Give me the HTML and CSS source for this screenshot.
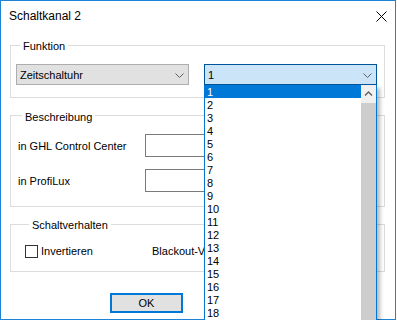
FILE: index.html
```html
<!DOCTYPE html>
<html lang="de">
<head>
  <meta charset="UTF-8" />
  <title>Schaltkanal 2</title>
  <link rel="stylesheet" href="styles.css">
</head>
<body>
  <div class="window">
    <div class="titlebar">
      <span class="title">Schaltkanal 2</span>
      <svg class="close" width="11" height="11" viewBox="0 0 11 11">
        <path d="M0.5 0.5 L10.5 10.5 M10.5 0.5 L0.5 10.5" stroke="#000" stroke-width="1" fill="none"/>
      </svg>
    </div>

    <div class="content">
      <!-- Funktion -->
      <div class="group group-funktion">
        <div class="legend">Funktion</div>
        <div class="combo-row">
          <div class="combo">
            <span>Zeitschaltuhr</span>
            <svg class="chev" width="9" height="5" viewBox="0 0 9 5"><path d="M0.5 0.5 L4.5 4.5 L8.5 0.5" stroke="#606060" fill="none"/></svg>
          </div>
          <div class="combo combo-open">
            <span>1</span>
            <svg class="chev" width="9" height="5" viewBox="0 0 9 5"><path d="M0.5 0.5 L4.5 4.5 L8.5 0.5" stroke="#606060" fill="none"/></svg>
            <div class="dropdown">
              <ul class="drop-list">
                <li class="selected">1</li>
                <li>2</li>
                <li>3</li>
                <li>4</li>
                <li>5</li>
                <li>6</li>
                <li>7</li>
                <li>8</li>
                <li>9</li>
                <li>10</li>
                <li>11</li>
                <li>12</li>
                <li>13</li>
                <li>14</li>
                <li>15</li>
                <li>16</li>
                <li>17</li>
                <li>18</li>
              </ul>
              <div class="scrollbar">
                <div class="scroll-up">
                  <svg width="9" height="5" viewBox="0 0 9 5"><path d="M1 4.5 L4.5 1 L8 4.5" stroke="#606060" stroke-width="1.4" fill="none"/></svg>
                </div>
                <div class="scroll-thumb"></div>
              </div>
            </div>
          </div>
        </div>
      </div>

      <!-- Beschreibung -->
      <div class="group group-besch">
        <div class="legend">Beschreibung</div>
        <div class="form-grid">
          <label>in GHL Control Center</label>
          <div class="textbox"></div>
          <label>in ProfiLux</label>
          <div class="textbox"></div>
        </div>
      </div>

      <!-- Schaltverhalten -->
      <div class="group group-schalt">
        <div class="legend">Schaltverhalten</div>
        <div class="check-row">
          <div class="check-item"><span class="checkbox"></span>Invertieren</div>
          <div class="blackout">Blackout-Verhalten</div>
        </div>
      </div>

      <button class="ok-btn">OK</button>
    </div>
  </div>
</body>
</html>
```

FILE: styles.css
```css
html, body {
  margin: 0;
  padding: 0;
  background: #fff;
  overflow: hidden;
  font-family: "Segoe UI", "Liberation Sans", Arial, sans-serif;
  font-size: 11px;
  color: #000;
}
.window {
  position: relative;
  width: 396px;
  height: 320px;
  box-sizing: border-box;
  border: 1px solid #1c83d6;
  background: #fff;
}
.titlebar {
  height: 29px;
  display: flex;
  align-items: center;
  justify-content: space-between;
  padding: 0 8px 0 8px;
}
.title {
  font-size: 12px;
}
.close {
  display: block;
  margin-top: 1px;
}
.content {
  padding: 15px 0 0 9px;
}
/* -- GROUP BOX -- */
.group {
  width: 375px;
  box-sizing: border-box;
  border: 1px solid #dcdcdc;
}
.legend {
  display: table;
  margin: -7px 0 0 4px;
  padding: 0 3px;
  line-height: 15px;
  background: #fff;
}
.group-funktion { padding: 11px 6px 12px 5px; }
.group-funktion .legend { margin-bottom: 10px; margin-top: -18px; }
.group-besch { margin-top: 17px; padding: 0 6px 14px 7px; }
.group-besch .legend { margin-top: -6px; }
.group-schalt { margin-top: 17px; padding: 0 6px 12px 14px; }
/* -- COMBOS -- */
.combo-row {
  display: flex;
  gap: 15px;
}
.combo {
  position: relative;
  width: 173px;
  height: 21px;
  box-sizing: border-box;
  border: 1px solid #adadad;
  background: #e1e1e1;
  display: flex;
  align-items: center;
  justify-content: space-between;
  padding: 0 4px 0 3px;
}
.chev { display: block; margin-top: 1px; }
.combo-open {
  background: #cce4f7;
  border-color: #005499;
}
.dropdown {
  position: absolute;
  top: 20px;
  left: -1px;
  width: 173px;
  height: 236px;
  box-sizing: border-box;
  border-left: 1px solid #0078d7;
  border-right: 1px solid #0078d7;
  background: #fff;
  display: flex;
  box-shadow: 3px 3px 4px rgba(0, 0, 0, 0.28);
  z-index: 10;
}
.drop-list {
  flex: 1;
  list-style: none;
  margin: 0;
  padding: 0;
}
.drop-list li {
  height: 13px;
  line-height: 14px;
  padding-left: 2px;
}
.drop-list li.selected {
  background: #0078d7;
  color: #fff;
}
.scrollbar {
  width: 15px;
  background: #f0f0f0;
  display: flex;
  flex-direction: column;
}
.scroll-up {
  height: 16px;
  display: flex;
  align-items: center;
  justify-content: center;
}
.scroll-thumb {
  flex: 1;
  margin-top: 2px;
  background: #cdcdcd;
}
/* -- BESCHREIBUNG -- */
.form-grid {
  margin-top: 9px;
  display: grid;
  grid-template-columns: 127px 232px;
  grid-auto-rows: 23px;
  row-gap: 12px;
  align-items: center;
}
.textbox {
  height: 23px;
  box-sizing: border-box;
  border: 1px solid #7a7a7a;
  background: #fff;
}
/* -- SCHALTVERHALTEN -- */
.check-row {
  margin-top: 10px;
  height: 16px;
  display: grid;
  grid-template-columns: 127px 52px;
  align-items: center;
}
.check-item {
  display: flex;
  align-items: center;
  gap: 3px;
}
.checkbox {
  width: 13px;
  height: 13px;
  box-sizing: border-box;
  border: 1px solid #333;
  background: #fff;
}
.blackout {
  white-space: nowrap;
  overflow: hidden;
}
.ok-btn {
  display: block;
  margin: 21px 0 0 100px;
  width: 73px;
  height: 20px;
  box-sizing: border-box;
  border: 2px solid #0078d7;
  background: #e1e1e1;
  font-family: inherit;
  font-size: 11px;
  color: #000;
  padding: 0;
}
```
